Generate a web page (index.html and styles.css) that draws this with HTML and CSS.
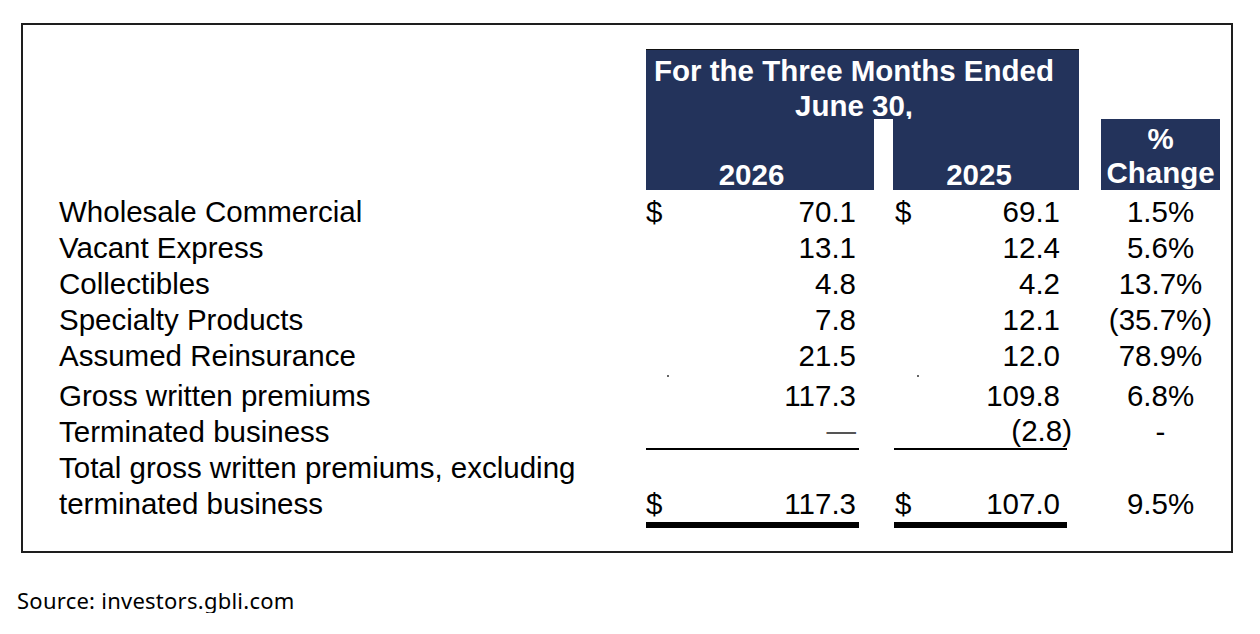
FILE: index.html
```html
<!DOCTYPE html>
<html lang="en">
<head>
<meta charset="utf-8">
<title>Gross written premiums</title>
<link rel="stylesheet" href="styles.css">
</head>
<body>
<div class="page">
  <div class="box">
    <div class="head">
      <div class="h-top">For the Three Months Ended<br>June 30,</div>
      <div class="h-year h-a">2026</div>
      <div class="h-year h-b">2025</div>
      <div class="h-pct">%<br>Change</div>
    </div>
    <div class="body">
      <div class="row">
        <div class="lbl">Wholesale Commercial</div>
        <div class="a"><span>$</span><span>70.1</span></div>
        <div class="b"><span>$</span><span>69.1</span></div>
        <div class="c">1.5%</div>
      </div>
      <div class="row">
        <div class="lbl">Vacant Express</div>
        <div class="a"><span></span><span>13.1</span></div>
        <div class="b"><span></span><span>12.4</span></div>
        <div class="c">5.6%</div>
      </div>
      <div class="row">
        <div class="lbl">Collectibles</div>
        <div class="a"><span></span><span>4.8</span></div>
        <div class="b"><span></span><span>4.2</span></div>
        <div class="c">13.7%</div>
      </div>
      <div class="row">
        <div class="lbl">Specialty Products</div>
        <div class="a"><span></span><span>7.8</span></div>
        <div class="b"><span></span><span>12.1</span></div>
        <div class="c">(35.7%)</div>
      </div>
      <div class="row">
        <div class="lbl">Assumed Reinsurance</div>
        <div class="a"><span></span><span>21.5</span></div>
        <div class="b"><span></span><span>12.0</span></div>
        <div class="c">78.9%</div>
      </div>
      <div class="row spacer">
        <div class="a"><span class="dot"></span></div>
        <div class="b"><span class="dot dot-b"></span></div>
      </div>
      <div class="row">
        <div class="lbl">Gross written premiums</div>
        <div class="a"><span></span><span>117.3</span></div>
        <div class="b"><span></span><span>109.8</span></div>
        <div class="c">6.8%</div>
      </div>
      <div class="row row-sub">
        <div class="lbl">Terminated business</div>
        <div class="a"><span></span><span class="dash">—</span></div>
        <div class="b"><span></span><span>(2.8<span class="rp">)</span></span></div>
        <div class="c">-</div>
      </div>
      <div class="row row-total">
        <div class="lbl">Total gross written premiums, excluding<br>terminated business</div>
        <div class="a"><span>$</span><span>117.3</span></div>
        <div class="b"><span>$</span><span>107.0</span></div>
        <div class="c">9.5%</div>
      </div>
    </div>
  </div>
  <p class="source">Source: investors.gbli.com</p>
</div>
</body>
</html>
```

FILE: styles.css
```css
:root {
  --cols: 587px 228px 19px 186px 22px 119px;
  --navy: #23335b;
}

* {
  box-sizing: border-box;
}

html, body {
  margin: 0;
  padding: 0;
  background: #ffffff;
}

.page {
  padding: 23px 27px 0 17px;
  font-family: "Liberation Sans", Arial, sans-serif;
  color: #000;
}

.box {
  margin-left: 4px;
  border: 2px solid #1e1e1e;
  padding: 24px 11px 23px 36px;
  font-size: 29.5px;
}

.head {
  display: grid;
  grid-template-columns: var(--cols);
  grid-template-rows: 70px 71px;
  color: #fff;
  font-weight: bold;
  line-height: 35px;
}

.h-top {
  grid-column: 2 / 5;
  grid-row: 1;
  background: var(--navy);
  border-top: 1px solid #111;
  padding: 3px 17px 0 0;
  text-align: center;
  white-space: nowrap;
}

.h-year {
  grid-row: 2;
  background: var(--navy);
  padding-top: 38px;
  text-align: center;
}

.h-a {
  grid-column: 2;
  padding-right: 17px;
}

.h-b {
  grid-column: 4;
  padding-right: 14px;
}

.h-pct {
  grid-column: 6;
  grid-row: 2;
  background: var(--navy);
  padding-top: 3px;
  text-align: center;
  line-height: 34px;
}

.body {
  margin-top: 4px;
}

.row {
  display: grid;
  grid-template-columns: var(--cols);
  height: 36px;
  line-height: 36px;
}

.lbl {
  grid-column: 1;
  white-space: nowrap;
}

.a, .b {
  display: flex;
  justify-content: space-between;
  white-space: nowrap;
}

.a {
  grid-column: 2;
  margin-right: 15px;
  padding-right: 3px;
}

.b {
  grid-column: 4;
  margin-left: 1px;
  margin-right: 12px;
  padding-left: 1px;
  padding-right: 7px;
}

.c {
  grid-column: 6;
  text-align: center;
  white-space: nowrap;
}

.rp {
  margin-right: -12px;
}

.dash {
  color: #555;
}

.spacer {
  height: 4px;
  line-height: 4px;
}

.spacer .a, .spacer .b {
  justify-content: flex-start;
  align-items: flex-start;
}

.dot {
  display: block;
  width: 2px;
  height: 2px;
  margin: 1px 0 0 21px;
  background: #666;
}

.dot-b {
  margin-left: 22px;
}

.row-sub .a, .row-sub .b {
  border-bottom: 2px solid #000;
  line-height: 34px;
}

.row-total {
  height: 78px;
}

.row-total .a, .row-total .b {
  align-items: flex-end;
  border-bottom: 6px solid #000;
}

.row-total .c {
  align-self: end;
  padding-bottom: 6px;
}

.source {
  margin: 34px 0 0 0;
  font-family: "Noto Sans", "Open Sans", sans-serif;
  font-size: 22px;
  letter-spacing: 0.25px;
  line-height: 26px;
  color: #000;
}
```
